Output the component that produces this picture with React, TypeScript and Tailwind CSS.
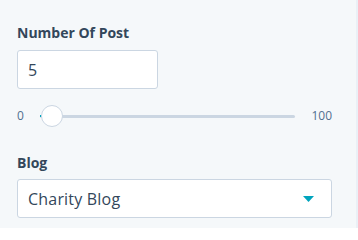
export default function App() {
  return (
    <div className="flex h-[228px] w-[358px] bg-[#f5f8fa] font-['Open_Sans',sans-serif] text-[#33475b]">
      <div className="flex flex-1 flex-col pl-[17px] pt-[23px]">
        <label className="text-[14px] font-bold leading-5">Number Of Post</label>
        <div className="mt-[7px] flex h-[39px] w-[141px] items-center rounded-[3px] border border-[#cbd6e2] bg-white px-[10px] text-[16px]">
          5
        </div>

        <div className="mt-[16px] flex h-[22px] w-[315px] items-center">
          <span className="w-[23px] text-[12px] text-[#516f90]">0</span>
          <div className="relative flex h-[22px] flex-1 items-center">
            <div className="h-[3px] w-full rounded-full bg-[#cbd6e2]" />
            <div className="absolute left-0 top-[10px] h-[2px] w-[3px] bg-[#00a4bd]" />
            <div className="absolute left-[1px] top-0 h-[22px] w-[22px] rounded-full border border-[#cbd6e2] bg-white" />
          </div>
          <span className="ml-[16px] text-[12px] text-[#516f90]">100</span>
        </div>

        <label className="mt-[26px] text-[14px] font-bold leading-5">Blog</label>
        <div className="mt-[6px] flex h-[39px] w-[315px] items-center justify-between rounded-[3px] border border-[#cbd6e2] bg-white pl-[10px] pr-[17px] text-[16px]">
          <span className="tracking-[0.2px]">Charity Blog</span>
          <svg width="11" height="6" viewBox="0 0 11 6">
            <path d="M0 0h11L5.5 6z" fill="#00a4bd" />
          </svg>
        </div>
      </div>
      <div className="w-[2px] bg-[#eaf0f6]" />
    </div>
  );
}
